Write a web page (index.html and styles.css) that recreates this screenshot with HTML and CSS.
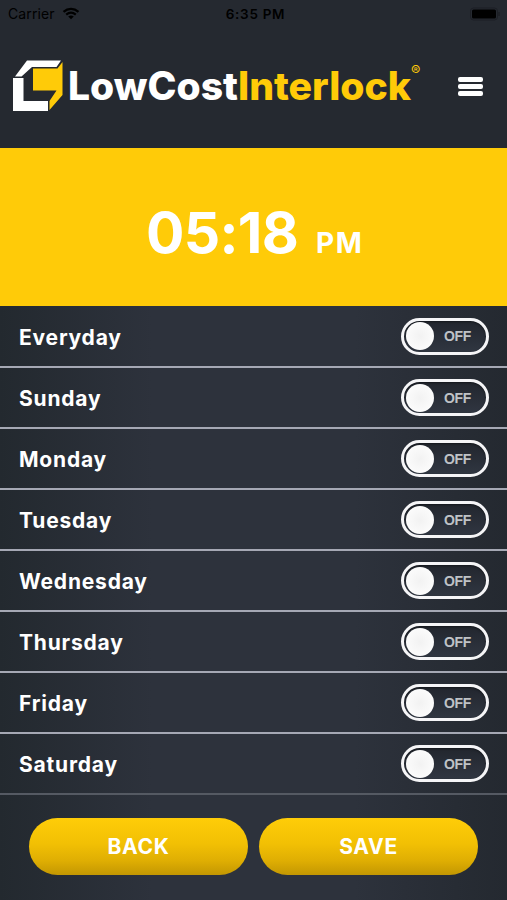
FILE: index.html
```
<!DOCTYPE html>
<html lang="en">

<head>
    <meta charset="utf-8">
    <title>Reminder</title>
    <link rel="stylesheet" href="styles.css">
</head>

<body>

    <div id="main">
        <div class="status-bar">
            <div class="carrier">
                <span>Carrier</span>
                <svg width="18" height="13" viewBox="0 0 18 13">
                    <path d="M1.500 4.800C6 .9 12 .9 16.500 4.800M4.200 7.600C7.200 5.100 10.800 5.100 13.800 7.600" fill="none" stroke="#000" stroke-width="2.200" />
                    <path d="M9 12.300L6.200 9.500Q9 7.500 11.800 9.500Z" />
                </svg>
            </div>
            <div class="clock">6:35 PM</div>
            <div class="battery">
                <svg width="30" height="14" viewBox="0 0 30 14">
                    <rect x=".5" y="1" width="27" height="12" rx="3" fill="none" stroke="#1c1f25" />
                    <rect x="2" y="2.500" width="24" height="9" rx="1.500" />
                    <path d="M29 5v4" stroke="#1c1f25" stroke-width="1.500" />
                </svg>
            </div>
        </div>

        <div class="header">
            <svg class="logo" width="412" height="56" viewBox="0 0 412 56">
                <path d="M14 5.500H48L43.500 12H19L8.500 21.500H2Z" fill="#fff" />
                <path d="M0 23H10.500V46H35V56H0Z" fill="#fff" />
                <path d="M20 13.500H44.500L49.500 7V40L36.500 55V46L43.500 35.500H20Z" fill="#ffcb08" />
                <text class="logo-text" x="55" y="44.500" textLength="170" lengthAdjust="spacingAndGlyphs" fill="#fff">LowCost</text>
                <text class="logo-text" x="225" y="44.500" textLength="173" lengthAdjust="spacingAndGlyphs" fill="#ffcb08">Interlock</text>
                <text class="logo-mark" x="398" y="21" fill="#ffcb08">®</text>
            </svg>
            <div class="menu">
                <span></span>
                <span></span>
                <span></span>
            </div>
        </div>

        <div class="time">
            <span class="hour">05:18</span>
            <span class="ampm">PM</span>
        </div>

        <ul class="days">
            <li><span class="day">Everyday</span><div class="toggle"><i></i><b>OFF</b></div></li>
            <li><span class="day">Sunday</span><div class="toggle"><i></i><b>OFF</b></div></li>
            <li><span class="day">Monday</span><div class="toggle"><i></i><b>OFF</b></div></li>
            <li><span class="day">Tuesday</span><div class="toggle"><i></i><b>OFF</b></div></li>
            <li><span class="day">Wednesday</span><div class="toggle"><i></i><b>OFF</b></div></li>
            <li><span class="day">Thursday</span><div class="toggle"><i></i><b>OFF</b></div></li>
            <li><span class="day">Friday</span><div class="toggle"><i></i><b>OFF</b></div></li>
            <li><span class="day">Saturday</span><div class="toggle"><i></i><b>OFF</b></div></li>
        </ul>

        <div class="buttons">
            <a class="button">BACK</a>
            <a class="button">SAVE</a>
        </div>
    </div>

</body>

</html>
```
FILE: styles.css
```
* {
    box-sizing: border-box;
}

body {
    padding: 0px;
    margin: 0px;
    background: #252930;
    color: #fff;
    font-family: Inter, "Liberation Sans", sans-serif;
}

#main {
    height: 900px;
    overflow: hidden;
    background: linear-gradient(to right, #23292f, #2d323c 30%, #2d323c 70%, #242930);
}

.status-bar {
    display: grid;
    grid-template-columns: 1fr auto 1fr;
    height: 27px;
    padding: 0px 7px 0px 8px;
    align-items: center;
    background: #252930;
    color: #000;
    font-size: 14px;
}

.carrier {
    display: flex;
    align-items: center;
    gap: 7px;
    letter-spacing: 0.1px;
}

.clock {
    padding-left: 3px;
    font-weight: 600;
    font-size: 13.5px;
    letter-spacing: 0.7px;
}

.battery {
    display: flex;
    justify-content: flex-end;
}

.header {
    display: flex;
    height: 121px;
    padding: 28px 24px 0px 13px;
    justify-content: space-between;
    align-items: flex-start;
    background: #252930;
}

.logo-text {
    font-size: 39px;
    font-weight: 800;
}

.logo-mark {
    font-size: 14px;
}

.menu {
    display: flex;
    flex-direction: column;
    gap: 2px;
    padding-top: 22px;
}

.menu span {
    width: 25px;
    height: 5px;
    border-radius: 2px;
    background: #fff;
}

.time {
    display: flex;
    height: 158px;
    padding: 50px 0px 0px 146px;
    align-items: baseline;
    background: #ffcb08;
    font-weight: 700;
}

.hour {
    width: 170px;
    font-size: 57px;
    letter-spacing: -0.7px;
}

.ampm {
    font-size: 28px;
    letter-spacing: 1.5px;
}

.days {
    margin: 0px;
    padding: 0px;
    list-style: none;
}

.days li {
    display: flex;
    height: 61px;
    padding: 0px 18px 0px 19px;
    justify-content: space-between;
    align-items: center;
    border-bottom: 2px solid #a5a8b4;
}

.days li:first-child {
    height: 62px;
}

.days li:last-child {
    border-bottom-color: #555a63;
}

.day {
    padding-top: 2px;
    font-size: 21px;
    font-weight: 700;
    letter-spacing: 0.8px;
}

.toggle {
    display: flex;
    width: 88px;
    height: 37px;
    padding-left: 2px;
    align-items: center;
    border: 3px solid #f5f5f7;
    border-radius: 19px;
    background: linear-gradient(#22262e, #303641);
    box-shadow: inset 0px 1px 2px #14171c;
}

.toggle i {
    width: 28px;
    height: 28px;
    border-radius: 50%;
    background: radial-gradient(#f2f2f2, #fff);
}

.toggle b {
    margin-left: 10px;
    color: #bfc2c6;
    font-family: "Liberation Sans", sans-serif;
    font-size: 14px;
    font-weight: 700;
    letter-spacing: -0.4px;
}

.buttons {
    display: flex;
    padding: 23px 29px 0px;
    gap: 11px;
}

.button {
    flex: 1;
    height: 57px;
    border-radius: 29px;
    background: linear-gradient(#ffcd08, #f2c004 45%, #dfae03 75%, #c39702);
    font-size: 21px;
    font-weight: 700;
    letter-spacing: 0.7px;
    line-height: 58px;
    text-align: center;
}
```
